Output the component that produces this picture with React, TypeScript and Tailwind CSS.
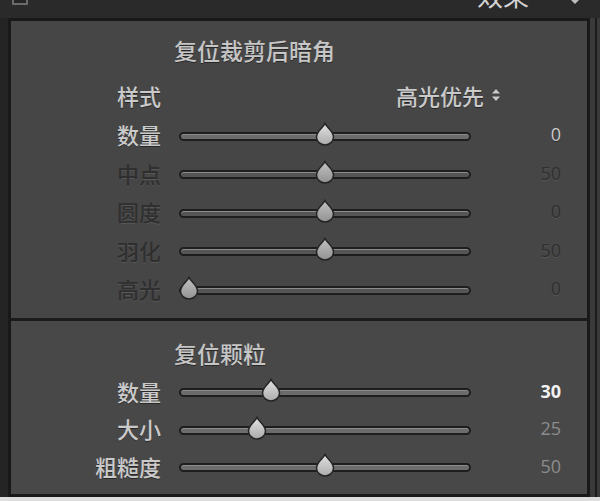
import React from "react";

type Tone = "on" | "off" | "bright" | "dim";

interface SliderRow {
  label: string;
  value: number;
  min: number;
  max: number;
  labelTone: Tone;
  valueTone: Tone;
}

const vignetteRows: SliderRow[] = [
  { label: "数量", value: 0, min: -100, max: 100, labelTone: "on", valueTone: "on" },
  { label: "中点", value: 50, min: 0, max: 100, labelTone: "off", valueTone: "off" },
  { label: "圆度", value: 0, min: -100, max: 100, labelTone: "off", valueTone: "off" },
  { label: "羽化", value: 50, min: 0, max: 100, labelTone: "off", valueTone: "off" },
  { label: "高光", value: 0, min: 0, max: 100, labelTone: "off", valueTone: "off" },
];

const grainRows: SliderRow[] = [
  { label: "数量", value: 30, min: 0, max: 100, labelTone: "on", valueTone: "bright" },
  { label: "大小", value: 25, min: 0, max: 100, labelTone: "on", valueTone: "dim" },
  { label: "粗糙度", value: 50, min: 0, max: 100, labelTone: "on", valueTone: "dim" },
];

const toneClass: Record<Tone, string> = {
  on: "text-[#cacaca] [text-shadow:0_1px_0_rgba(0,0,0,0.45)]",
  off: "text-[#2f2f2f] [text-shadow:0_1px_0_rgba(120,120,120,0.35)]",
  bright: "text-[#f2f2f2] font-bold",
  dim: "text-[#8c8c8c]",
};

const cjk = "font-['Noto_Sans_CJK_SC','Noto_Sans',sans-serif]";

const Thumb = ({ left, dim }: { left: number; dim: boolean }) => (
  <svg
    className="absolute -top-[12px] -translate-x-1/2"
    style={{ left }}
    width="22"
    height="24"
    viewBox="0 0 22 24"
  >
    <defs>
      <linearGradient id={dim ? "thumbDim" : "thumbOn"} x1="0" y1="0" x2="0" y2="1">
        <stop offset="0" stopColor={dim ? "#c2c2c2" : "#e2e2e2"} />
        <stop offset="1" stopColor={dim ? "#929292" : "#ababab"} />
      </linearGradient>
    </defs>
    <path
      d="M11 1.5 C12.8 5.5, 19.5 9, 19.5 15 A8.5 8 0 0 1 2.5 15 C2.5 9, 9.2 5.5, 11 1.5 Z"
      fill={`url(#${dim ? "thumbDim" : "thumbOn"})`}
      stroke="#242424"
      strokeWidth="1.5"
    />
  </svg>
);

const Slider = ({ row }: { row: SliderRow }) => {
  const frac = (row.value - row.min) / (row.max - row.min);
  const dim = row.labelTone === "off";
  return (
    <div
      className={`relative ml-[18px] mt-[4px] h-[9px] w-[292px] rounded-full border-2 border-[#1e1e1e] ${
        dim ? "bg-[#555555]" : "bg-[#6c6c6c]"
      } shadow-[inset_0_1px_0_#8c8c8c]`}
    >
      <Thumb left={8 + frac * 272} dim={dim} />
    </div>
  );
};

const Row = ({ row, h }: { row: SliderRow; h: string }) => (
  <div className={`flex items-center ${h}`}>
    <div className={`w-[150px] text-right text-[22px] font-medium leading-none ${cjk} ${toneClass[row.labelTone]}`}>
      {row.label}
    </div>
    <Slider row={row} />
    <div
      className={`w-[90px] text-right text-[18px] leading-none font-['Open_Sans','Liberation_Sans',sans-serif] ${toneClass[row.valueTone]}`}
    >
      {row.value}
    </div>
  </div>
);

const UpDown = () => (
  <svg width="10" height="14" viewBox="0 0 10 14" className="ml-[7px]">
    <path d="M5 1 L9 5.5 H1 Z" fill="#c9c9c9" />
    <path d="M5 13 L9 8.5 H1 Z" fill="#c9c9c9" />
  </svg>
);

export default function App() {
  return (
    <div className="flex h-[501px] w-[600px] flex-col overflow-hidden bg-[#2a2a2a]">
      {/* header, mostly cut off */}
      <div className="flex h-[18px] shrink-0 items-start">
        <div className="ml-[12px] -mt-[11px] h-[16px] w-[16px] border-2 border-[#6a6a6a] bg-[#262626]" />
        <div className={`ml-[449px] -mt-[18px] text-[26px] leading-[26px] text-[#d4d4d4] ${cjk}`}>效果</div>
        <svg width="8" height="5" viewBox="0 0 8 5" className="ml-[42px]">
          <path d="M0 0 H8 L4 4 Z" fill="#bdbdbd" />
        </svg>
      </div>

      <div className="flex min-h-0 flex-1">
        <div className="w-[8px] bg-[#242424]" />
        <div className="flex w-[582px] flex-col border-[3px] border-[#191919] bg-[#464646]">
          {/* 裁剪后暗角 */}
          <section className="flex h-[297px] shrink-0 flex-col pt-[14px]">
            <div className={`h-[30px] pl-[163px] text-[23px] font-medium leading-[30px] text-[#c6c6c6] ${cjk} [text-shadow:0_1px_0_rgba(0,0,0,0.45)]`}>
              复位裁剪后暗角
            </div>
            <div className="mt-[10px] flex h-[40px] items-center">
              <div className={`w-[150px] text-right text-[22px] font-medium leading-none ${cjk} ${toneClass.on}`}>样式</div>
              <div className={`ml-[235px] flex items-center text-[22px] font-medium leading-none ${cjk} ${toneClass.on}`}>
                高光优先
                <UpDown />
              </div>
            </div>
            {vignetteRows.map((r) => (
              <Row key={r.label} row={r} h="h-[38.5px]" />
            ))}
          </section>

          <div className="h-[3px] shrink-0 bg-[#1b1b1b]" />

          {/* 颗粒 */}
          <section className="flex flex-1 flex-col bg-[#484848] pt-[17px]">
            <div className={`h-[30px] pl-[163px] text-[23px] font-medium leading-[30px] text-[#c6c6c6] ${cjk} [text-shadow:0_1px_0_rgba(0,0,0,0.45)]`}>
              复位颗粒
            </div>
            <div className="mt-[4px]">
              {grainRows.map((r) => (
                <Row key={r.label} row={r} h="h-[37.5px]" />
              ))}
            </div>
          </section>
        </div>
        <div className="flex flex-1 bg-[#3a3a3a]">
          <div className="ml-[5px] w-[2px] bg-[#1c1c1c]" />
        </div>
      </div>

      <div className="h-[4px] shrink-0 bg-[#dedede]" />
    </div>
  );
}
